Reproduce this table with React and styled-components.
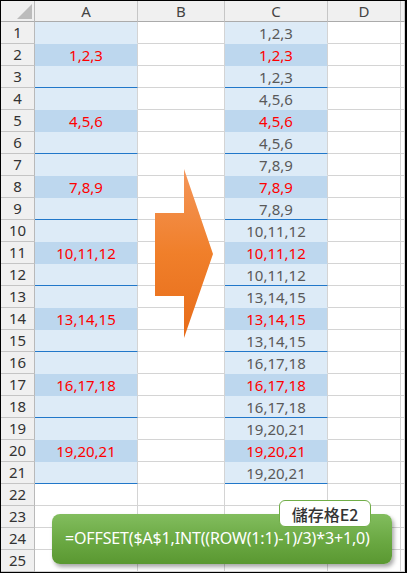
import React from "react";
import styled, { createGlobalStyle } from "styled-components";

const GlobalStyle = createGlobalStyle`
  * { box-sizing: border-box; }
  body {
    margin: 0;
    background: #fff;
    font-family: "Noto Sans", "Noto Sans CJK TC", sans-serif;
  }
`;

const COLS = ["A", "B", "C", "D"];
const ROWS = Array.from({ length: 25 }, (_, i) => i + 1);

const Frame = styled.div`
  position: relative;
  width: 407px;
  height: 573px;
  border-top: 1px solid #000;
  border-left: 1px solid #000;
  border-right: 2px solid #000;
  border-bottom: 1px solid #000;
  overflow: hidden;
`;

const Sheet = styled.div`
  display: grid;
  grid-template-columns: 34px 103px 87px 103px 73px 1fr;
  grid-template-rows: 21px repeat(25, 22px);
`;

const Corner = styled.div`
  position: relative;
  background: #f0f0f0;
  border-right: 1px solid #b9b9b9;
  border-bottom: 1px solid #ababab;
  svg {
    position: absolute;
    right: 2px;
    bottom: 2px;
  }
`;

const ColHead = styled.div`
  display: flex;
  align-items: center;
  justify-content: center;
  background: #f0f0f0;
  border-right: 1px solid #c6c6c6;
  border-bottom: 1px solid #ababab;
  color: #444;
  font-size: 15px;
  line-height: 1;
`;

const RowHead = styled.div`
  display: flex;
  align-items: center;
  justify-content: center;
  background: #f0f0f0;
  border-right: 1px solid #b9b9b9;
  border-bottom: 1px solid #c4c4c4;
  color: #333;
  font-size: 15px;
  line-height: 1;
`;

const FILLS = { light: "#ddebf7", dark: "#bdd7ee" };

const Cell = styled.div`
  display: flex;
  align-items: center;
  justify-content: center;
  background: ${(p) => (p.$fill ? FILLS[p.$fill] : "#fff")};
  border-right: 1px solid #d4d4d4;
  border-bottom: 1px solid
    ${(p) => (p.$sep ? "#2177c9" : p.$fill ? "transparent" : "#d4d4d4")};
  color: ${(p) => (p.$red ? "#ff0000" : "#595959")};
  font-size: 15px;
  line-height: 1;
  padding-top: 1px;
`;

const Arrow = styled.svg`
  position: absolute;
  left: 154px;
  top: 167px;
`;

const Callout = styled.div`
  position: absolute;
  left: 51px;
  top: 499px;
  width: 340px;
`;

const Tag = styled.div`
  position: absolute;
  top: 0;
  right: 21px;
  z-index: 1;
  width: 92px;
  height: 27px;
  display: flex;
  align-items: center;
  justify-content: center;
  background: #fff;
  border: 1px solid #70ad47;
  border-radius: 6px;
  color: #333;
  font-size: 16px;
  font-weight: 500;
  font-family: "Noto Sans CJK TC", "Noto Sans", sans-serif;
`;

const Formula = styled.div`
  margin-top: 14px;
  height: 50px;
  display: flex;
  align-items: center;
  padding: 0 0 2px 13px;
  border-radius: 8px;
  background: linear-gradient(#82bd5e, #6aa842 55%, #5a9831);
  box-shadow: 2px 3px 4px rgba(0, 0, 0, 0.35);
  color: #fff;
  font-size: 16px;
  letter-spacing: -0.15px;
  white-space: nowrap;
`;

const groupText = (r) => {
  const g = Math.floor((r - 1) / 3);
  return `${3 * g + 1},${3 * g + 2},${3 * g + 3}`;
};

export default function App() {
  return (
    <>
      <GlobalStyle />
      <Frame>
        <Sheet>
          <Corner>
            <svg width="15" height="15" viewBox="0 0 15 15">
              <polygon points="15,0 15,15 0,15" fill="#bcbcbc" />
            </svg>
          </Corner>
          {COLS.map((c) => (
            <ColHead key={c}>{c}</ColHead>
          ))}
          <ColHead />
          {ROWS.map((r) => {
            const inData = r <= 21;
            const dark = inData && r % 3 === 2;
            const fill = inData ? (dark ? "dark" : "light") : null;
            const sep = inData && r % 3 === 0;
            return (
              <React.Fragment key={r}>
                <RowHead>{r}</RowHead>
                <Cell $fill={fill} $sep={sep} $red>
                  {dark ? groupText(r) : ""}
                </Cell>
                <Cell />
                <Cell $fill={fill} $sep={sep} $red={dark}>
                  {inData ? groupText(r) : ""}
                </Cell>
                <Cell />
                <Cell />
              </React.Fragment>
            );
          })}
        </Sheet>

        <Arrow width="58" height="170" viewBox="0 0 58 170">
          <defs>
            <linearGradient id="arrowFill" x1="0" y1="0" x2="0" y2="1">
              <stop offset="0" stopColor="#f4965a" />
              <stop offset="0.5" stopColor="#f07f2a" />
              <stop offset="1" stopColor="#e76c1a" />
            </linearGradient>
          </defs>
          <polygon
            points="0,45 29,45 29,1 58,86 29,170 29,128 0,128"
            fill="url(#arrowFill)"
          />
        </Arrow>

        <Callout>
          <Tag>儲存格E2</Tag>
          <Formula>=OFFSET($A$1,INT((ROW(1:1)-1)/3)*3+1,0)</Formula>
        </Callout>
      </Frame>
    </>
  );
}
